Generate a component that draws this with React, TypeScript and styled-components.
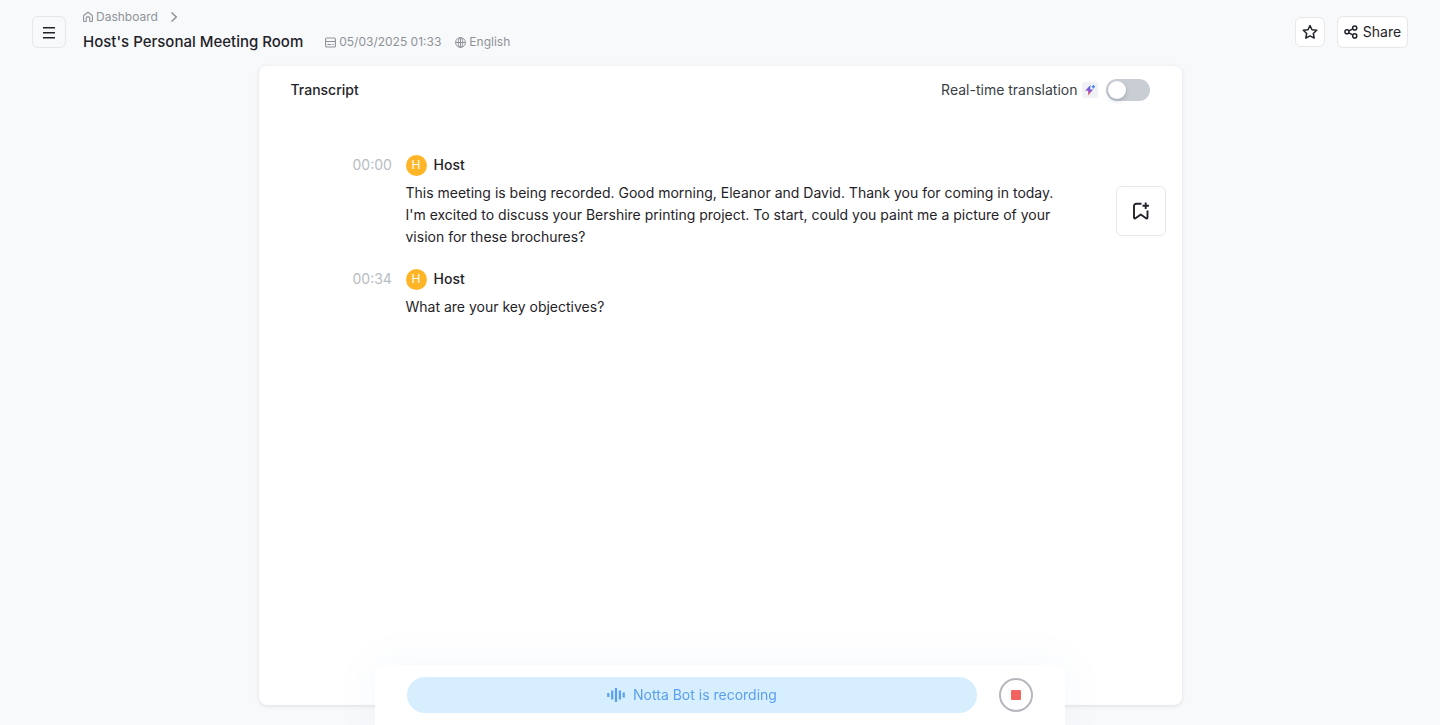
import React from 'react';
import styled, { createGlobalStyle } from 'styled-components';

const GlobalStyle = createGlobalStyle`
  *, *::before, *::after { box-sizing: border-box; }
  body {
    margin: 0;
    background: #f8f9fb;
    color: #1f2329;
    font-family: Inter, "Liberation Sans", sans-serif;
    font-size: 14px;
    line-height: 22px;
  }
  button { font: inherit; color: inherit; cursor: pointer; }
  h1, h2, h3, p { margin: 0; }
  svg { display: block; flex: none; }
`;

const Page = styled.div`
  min-height: 100vh;
  display: flex;
  flex-direction: column;
`;

const Header = styled.header`
  display: flex;
  align-items: center;
  height: 66px;
  padding: 0 32px 2px;
`;

const OutlineButton = styled.button<{ $width: number; $height: number; $plain?: boolean }>`
  display: flex;
  align-items: center;
  justify-content: center;
  gap: 5px;
  flex: none;
  width: ${(p) => p.$width}px;
  height: ${(p) => p.$height}px;
  padding: 0;
  border: 1px solid #e6e7ea;
  border-radius: 6px;
  background: ${(p) => (p.$plain ? 'transparent' : '#fff')};
`;

const Titles = styled.div`
  flex: 1;
  min-width: 0;
  padding: 0 17px 2px;
`;

const Breadcrumb = styled.nav`
  display: flex;
  align-items: center;
  gap: 11px;
  height: 22px;
  color: #8f9399;
  font-size: 12px;
`;

const CrumbLink = styled.a`
  display: flex;
  align-items: center;
  gap: 3px;
  color: inherit;
  text-decoration: none;
`;

const TitleRow = styled.div`
  display: flex;
  align-items: center;
  height: 28px;
`;

const Title = styled.h1`
  font-size: 15px;
  font-weight: 500;
  margin-right: 22px;
  white-space: nowrap;
`;

const Meta = styled.span`
  display: flex;
  align-items: center;
  gap: 3px;
  margin-right: 14px;
  color: #8f9399;
  font-size: 12px;
  white-space: nowrap;
`;

const Actions = styled.div`
  display: flex;
  align-items: center;
  gap: 12px;
`;

const Card = styled.main`
  flex: 1;
  width: calc(100% - 64px);
  max-width: 923px;
  margin: 0 auto 20px;
  border-radius: 8px;
  background: #fff;
  box-shadow: 0 1px 4px rgba(31, 35, 41, 0.12);
`;

const CardHeader = styled.div`
  display: flex;
  align-items: center;
  justify-content: space-between;
  height: 48px;
  padding: 0 32px;
`;

const CardTitle = styled.h2`
  font-size: 14px;
  font-weight: 500;
`;

const ToggleLabel = styled.label`
  display: flex;
  align-items: center;
  color: #3a3f47;
`;

const SparkBadge = styled.span`
  display: flex;
  align-items: center;
  justify-content: center;
  width: 16px;
  height: 16px;
  margin: 0 8px 0 4px;
  border-radius: 3px;
  background: #f1f2f6;
`;

const Switch = styled.input`
  appearance: none;
  display: flex;
  align-items: center;
  width: 44px;
  height: 22px;
  margin: 0;
  padding: 0 2px;
  border-radius: 11px;
  background: #c9cdd4;
  cursor: pointer;
  &::before {
    content: '';
    width: 18px;
    height: 18px;
    border-radius: 50%;
    background: #fff;
    box-shadow: 0 2px 4px rgba(0, 35, 70, 0.2);
  }
  &:checked { background: #3370ff; justify-content: flex-end; }
`;

const CardBody = styled.div`
  display: flex;
  align-items: flex-start;
  justify-content: space-between;
  padding: 40px 16px 80px 94px;
`;

const Entries = styled.div`
  display: flex;
  flex-direction: column;
  gap: 20px;
  max-width: 708px;
`;

const Entry = styled.article`
  display: grid;
  grid-template-columns: 53px 1fr;
  row-gap: 6px;
`;

const Time = styled.time`
  color: #b8bcc4;
`;

const Speaker = styled.div`
  display: flex;
  align-items: center;
  gap: 7px;
`;

const Avatar = styled.span`
  display: flex;
  align-items: center;
  justify-content: center;
  width: 21px;
  height: 21px;
  border-radius: 50%;
  background: #ffb527;
  color: #fff;
  font-size: 12px;
`;

const SpeakerName = styled.h3`
  font-size: 14px;
  font-weight: 500;
`;

const Speech = styled.p`
  grid-column: 2;
`;

const BookmarkButton = styled(OutlineButton)`
  margin-top: 32px;
`;

const Dock = styled.footer`
  position: fixed;
  bottom: 0;
  left: 50%;
  transform: translateX(-50%);
  display: flex;
  align-items: center;
  gap: 22px;
  width: 690px;
  max-width: 100%;
  height: 60px;
  padding: 0 32px;
  border-radius: 8px 8px 0 0;
  background: #fff;
  box-shadow: 0 0 40px rgba(110, 150, 210, 0.08);
`;

const Status = styled.div`
  flex: 1;
  display: flex;
  align-items: center;
  justify-content: center;
  gap: 8px;
  height: 36px;
  border-radius: 18px;
  background: #d6eefe;
  color: #5a9ff0;
`;

const StopButton = styled.button`
  display: flex;
  align-items: center;
  justify-content: center;
  width: 34px;
  height: 34px;
  padding: 0;
  border: 2px solid #b5b8bd;
  border-radius: 50%;
  background: #fff;
`;

const StopMark = styled.span`
  width: 10px;
  height: 10px;
  border-radius: 1px;
  background: #f2635f;
`;

const entries = [
  {
    time: '00:00',
    speaker: 'Host',
    text: "This meeting is being recorded. Good morning, Eleanor and David. Thank you for coming in today. I'm excited to discuss your Bershire printing project. To start, could you paint me a picture of your vision for these brochures?",
  },
  { time: '00:34', speaker: 'Host', text: 'What are your key objectives?' },
];

const line = { fill: 'none', stroke: 'currentColor', 'aria-hidden': true } as const;

const MenuIcon = () => (
  <svg width="14" height="14" viewBox="0 0 14 14" {...line} strokeWidth="1.4">
    <path d="M1 2.700h12M1 7.700h12M1 12.700h12" />
  </svg>
);

const HomeIcon = () => (
  <svg width="10" height="12" viewBox="0 0 10 12" {...line} strokeWidth="1.1" strokeLinejoin="round">
    <path d="M3.200 10.500H1.300a.7.7 0 0 1-.7-.7V4.500L5 1.300l4.400 3.200v5.300a.7.7 0 0 1-.7.7H6.800V7.400a1.800 1.800 0 0 0-3.600 0z" />
  </svg>
);

const ChevronIcon = () => (
  <svg width="10" height="12" viewBox="0 0 10 12" {...line} strokeWidth="1.5">
    <path d="M2.500 1.500 7.300 6l-4.800 4.500" />
  </svg>
);

const CalendarIcon = () => (
  <svg width="11" height="11" viewBox="0 0 11 11" {...line} strokeWidth="1.1">
    <rect x=".6" y="1" width="9.800" height="9" rx="1.300" />
    <path d="M.6 4.500h9.800M2.500 7.500h3.500M7.200 7.500h1.500" />
  </svg>
);

const GlobeIcon = () => (
  <svg width="11" height="11" viewBox="0 0 11 11" {...line}>
    <circle cx="5.500" cy="5.500" r="4.900" />
    <ellipse cx="5.500" cy="5.500" rx="2.200" ry="4.900" />
    <path d="M.6 5.500h9.800M5.500 .6v9.800" />
  </svg>
);

const StarIcon = () => (
  <svg width="16" height="16" viewBox="0 0 16 16" {...line} strokeWidth="1.500" strokeLinejoin="round">
    <path d="m8 1.500 2 4.200 4.700.6-3.400 3.200.9 4.600L8 11.900l-4.200 2.200.9-4.600L1.300 6.300 6 5.700z" />
  </svg>
);

const ShareIcon = () => (
  <svg width="14" height="14" viewBox="0 0 15 15" {...line} strokeWidth="1.600">
    <circle cx="3.200" cy="7.300" r="2.200" />
    <circle cx="11.500" cy="3.200" r="2.200" />
    <circle cx="11.500" cy="11.700" r="2.200" />
    <path d="m5.200 6.300 4.200-2.100M5.200 8.400l4.200 2.200" />
  </svg>
);

const SparkIcon = () => (
  <svg width="12" height="12" viewBox="0 0 12 12" aria-hidden>
    <defs>
      <linearGradient id="spark" x1="7" y1="1" x2="5" y2="11" gradientUnits="userSpaceOnUse">
        <stop offset="0" stopColor="#3d6df5" />
        <stop offset=".5" stopColor="#7a55dc" />
        <stop offset="1" stopColor="#ff5a50" />
      </linearGradient>
    </defs>
    <path d="M6.500 1 1.200 6.800h3L4 11.500l5.200-6.100H6.200z" fill="url(#spark)" />
    <path d="m9.400.4.8 1.500 1.500.8-1.500.8-.8 1.500-.8-1.500-1.500-.8 1.500-.8z" fill="#3f83f0" />
  </svg>
);

const BookmarkPlusIcon = () => (
  <svg width="18" height="20" viewBox="0 0 18 20" {...line} strokeWidth="1.900">
    <path
      d="M9.500 2.800H4.200A2.200 2.200 0 0 0 2 5v11.400c0 .9.800 1.300 1.500.8l5.300-3.700 5.200 3.700c.7.500 1.500.1 1.500-.8V9.500"
      strokeLinejoin="round"
    />
    <path d="M13.700 1.600v6.400M10.500 4.800h6.400" />
  </svg>
);

const WaveIcon = () => (
  <svg width="18" height="14" viewBox="0 0 18 14" {...line} strokeWidth="2.200">
    <path d="M1.300 5v4M5.200 2.500v9M9 0v14M12.900 2.500v9M16.700 4.500v5" />
  </svg>
);

export default function App() {
  return (
    <Page>
      <GlobalStyle />
      <Header>
        <OutlineButton $width={34} $height={32} $plain aria-label="Open menu">
          <MenuIcon />
        </OutlineButton>
        <Titles>
          <Breadcrumb aria-label="Breadcrumb">
            <CrumbLink href="#dashboard">
              <HomeIcon />
              Dashboard
            </CrumbLink>
            <ChevronIcon />
          </Breadcrumb>
          <TitleRow>
            <Title>Host's Personal Meeting Room</Title>
            <Meta>
              <CalendarIcon />
              05/03/2025 01:33
            </Meta>
            <Meta>
              <GlobeIcon />
              English
            </Meta>
          </TitleRow>
        </Titles>
        <Actions>
          <OutlineButton $width={30} $height={30} aria-label="Add to favorites">
            <StarIcon />
          </OutlineButton>
          <OutlineButton $width={71} $height={32}>
            <ShareIcon />
            Share
          </OutlineButton>
        </Actions>
      </Header>
      <Card>
        <CardHeader>
          <CardTitle>Transcript</CardTitle>
          <ToggleLabel>
            Real-time translation
            <SparkBadge>
              <SparkIcon />
            </SparkBadge>
            <Switch type="checkbox" role="switch" />
          </ToggleLabel>
        </CardHeader>
        <CardBody>
          <Entries>
            {entries.map((entry) => (
              <Entry key={entry.time}>
                <Time>{entry.time}</Time>
                <Speaker>
                  <Avatar>H</Avatar>
                  <SpeakerName>{entry.speaker}</SpeakerName>
                </Speaker>
                <Speech>{entry.text}</Speech>
              </Entry>
            ))}
          </Entries>
          <BookmarkButton $width={50} $height={50} aria-label="Add bookmark">
            <BookmarkPlusIcon />
          </BookmarkButton>
        </CardBody>
      </Card>
      <Dock>
        <Status role="status">
          <WaveIcon />
          Notta Bot is recording
        </Status>
        <StopButton aria-label="Stop recording">
          <StopMark />
        </StopButton>
      </Dock>
    </Page>
  );
}
